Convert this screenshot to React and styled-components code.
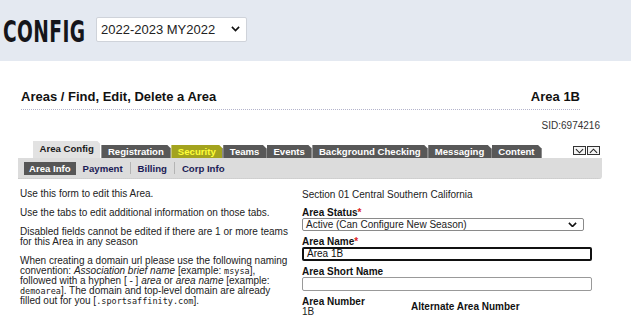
import React from "react";
import styled, { createGlobalStyle } from "styled-components";

const Global = createGlobalStyle`
  html, body { margin: 0; padding: 0; background: #fff; }
  body { font-family: "Liberation Sans", Arial, sans-serif; color: #222; }
`;

const Header = styled.header`
  height: 61px;
  background: #e4e9f1;
  display: flex;
  align-items: center;
  gap: 14px;
  padding-left: 3px;
`;

const BrandBox = styled.div`
  width: 79px;
  height: 30px;
  overflow: visible;
  margin-top: 2px;
`;

const Brand = styled.div`
  font-family: "DejaVu Sans Condensed", "Liberation Sans", sans-serif;
  font-weight: 700;
  font-size: 30px;
  line-height: 30px;
  color: #15151a;
  transform: scaleX(0.69);
  transform-origin: left center;
  white-space: nowrap;
  letter-spacing: 0.6px;
`;

const SeasonSelect = styled.div`
  width: 151px;
  height: 25px;
  box-sizing: border-box;
  background: #fff;
  border: 1px solid #cfd3da;
  border-radius: 2px;
  display: flex;
  align-items: center;
  justify-content: space-between;
  padding: 0 6px 0 4px;
  font-size: 13px;
  color: #222;
  margin-top: -3px;
`;

const FieldSelect = styled.div`
  width: 282px;
  height: 13px;
  box-sizing: border-box;
  border: 1px solid #8a8a8a;
  border-radius: 2px;
  display: flex;
  align-items: center;
  justify-content: space-between;
  padding: 0 6px 0 3px;
  font-size: 10px;
  color: #222;
`;

const Chevron = ({ size = 9 }) => (
  <svg width={size} height={size * 0.6} viewBox="0 0 10 6">
    <path d="M1 1 L5 5 L9 1" fill="none" stroke="#111" strokeWidth="1.8" />
  </svg>
);

const TitleRow = styled.div`
  margin: 28px 51px 0 21px;
  display: flex;
  justify-content: space-between;
  align-items: baseline;
  font-size: 13px;
  font-weight: 700;
  line-height: 15px;
  color: #111;
  padding-bottom: 5px;
  border-bottom: 1px dotted #b4b4cc;
`;

const Sid = styled.div`
  margin: 10px 31px 0 0;
  text-align: right;
  font-size: 10px;
  line-height: 12px;
  color: #333;
`;

const TabsArea = styled.div`
  margin: 9px 29px 0 18px;
`;

const TabRow = styled.div`
  display: flex;
  align-items: flex-end;
  padding-left: 15px;
  height: 17px;
`;

const Tab = styled.div`
  font-size: 9.6px;
  font-weight: 700;
  height: ${(p) => (p.$active ? "17px" : "13px")};
  line-height: ${(p) => (p.$active ? "16px" : "13px")};
  padding: 0 6.5px;
  background: ${(p) => (p.$active ? "#e2e2e2" : p.$hl ? "#a3a31e" : "#585858")};
  color: ${(p) => (p.$active ? "#1a1a1a" : p.$hl ? "#ffff3a" : "#fff")};
  border-right: 1px solid ${(p) => (p.$active ? "#fff" : "#8c8c8c")};
  clip-path: polygon(0 0, calc(100% - 4px) 0, 100% 4px, 100% 100%, 0 100%);
  white-space: nowrap;
`;

const Arrows = styled.div`
  margin-left: auto;
  margin-right: 2px;
  align-self: center;
  margin-top: 2px;
  display: flex;
  gap: 1px;
`;

const ArrowBtn = styled.div`
  width: 13px;
  height: 9px;
  box-sizing: border-box;
  border: 1px solid #333;
  background: #f4f4f4;
  display: flex;
  align-items: center;
  justify-content: center;
`;

const SubBar = styled.div`
  height: 20px;
  background: #dcdcdc;
  border-radius: 0 0 3px 0;
  border-bottom: 1px dotted #c4c4c4;
  display: flex;
  align-items: center;
  padding-left: 6px;
`;

const SubTab = styled.div`
  font-size: 9.6px;
  font-weight: 700;
  height: 13px;
  line-height: 13px;
  padding: 0 ${(p) => (p.$active ? "5px" : "7px")};
  background: ${(p) => (p.$active ? "#565656" : "transparent")};
  color: ${(p) => (p.$active ? "#fff" : "#1b1b55")};
  white-space: nowrap;
`;

const SubSep = styled.div`
  width: 1px;
  height: 12px;
  background: #b4b4b4;
`;

const Columns = styled.div`
  display: grid;
  grid-template-columns: 272px 290px;
  column-gap: 10px;
  padding: 10px 0 0 20px;
`;

const Help = styled.div`
  font-size: 10px;
  line-height: 10px;
  color: #222;
`;

const P = styled.p`
  margin: 0 0 9px;
`;

const Code = styled.span`
  font-family: "DejaVu Sans Mono", "Liberation Mono", monospace;
  font-size: 8.5px;
  line-height: 8px;
`;

const Form = styled.div`
  font-size: 10px;
  color: #222;
`;

const Section = styled.div`
  line-height: 12px;
  margin-bottom: 6px;
`;

const Label = styled.div`
  font-weight: 700;
  line-height: 11px;
  color: #111;
`;

const Req = styled.span`
  color: #d22;
`;

const Field = styled.div`
  margin-bottom: 5px;
`;

const Input = styled.div`
  width: 290px;
  height: 14px;
  box-sizing: border-box;
  border: ${(p) => (p.$focus ? "2px solid #111" : "1px solid #999")};
  border-radius: 2px;
  padding: 0 3px;
  line-height: ${(p) => (p.$focus ? "10px" : "12px")};
  font-size: 10px;
  color: #111;
`;

const NumberRow = styled.div`
  display: grid;
  grid-template-columns: 109px 1fr;
  align-items: center;
`;

const Value = styled.div`
  line-height: 10px;
`;

export default function App() {
  const tabs = ["Registration", "Security", "Teams", "Events", "Background Checking", "Messaging", "Content"];
  return (
    <>
      <Global />
      <Header>
        <BrandBox>
          <Brand>CONFIG</Brand>
        </BrandBox>
        <SeasonSelect>
          <span>2022-2023 MY2022</span>
          <Chevron size={9} />
        </SeasonSelect>
      </Header>
      <TitleRow>
        <span>Areas / Find, Edit, Delete a Area</span>
        <span>Area 1B</span>
      </TitleRow>
      <Sid>SID:6974216</Sid>
      <TabsArea>
        <TabRow>
          <Tab $active>Area Config</Tab>
          {tabs.map((t) => (
            <Tab key={t} $hl={t === "Security"}>
              {t}
            </Tab>
          ))}
          <Arrows>
            <ArrowBtn>
              <svg width="9" height="6" viewBox="0 0 10 6">
                <path d="M1 1 L5 5 L9 1" fill="none" stroke="#222" strokeWidth="1.2" />
              </svg>
            </ArrowBtn>
            <ArrowBtn>
              <svg width="9" height="6" viewBox="0 0 10 6">
                <path d="M1 5 L5 1 L9 5" fill="none" stroke="#222" strokeWidth="1.2" />
              </svg>
            </ArrowBtn>
          </Arrows>
        </TabRow>
        <SubBar>
          <SubTab $active>Area Info</SubTab>
          <SubTab>Payment</SubTab>
          <SubSep />
          <SubTab>Billing</SubTab>
          <SubSep />
          <SubTab>Corp Info</SubTab>
        </SubBar>
      </TabsArea>
      <Columns>
        <Help>
          <P>Use this form to edit this Area.</P>
          <P>Use the tabs to edit additional information on those tabs.</P>
          <P>Disabled fields cannot be edited if there are 1 or more teams for this Area in any season</P>
          <P>
            When creating a domain url please use the following naming convention: <i>Association brief name</i>{" "}
            [example: <Code>msysa</Code>], followed with a hyphen [ - ] <i>area</i> or <i>area name</i> [example:{" "}
            <Code>demoarea</Code>]. The domain and top-level domain are already filled out for you [
            <Code>.sportsaffinity.com</Code>].
          </P>
        </Help>
        <Form>
          <Section>Section 01 Central Southern California</Section>
          <Field>
            <Label>
              Area Status<Req>*</Req>
            </Label>
            <FieldSelect>
              <span>Active (Can Configure New Season)</span>
              <Chevron size={9} />
            </FieldSelect>
          </Field>
          <Field>
            <Label>
              Area Name<Req>*</Req>
            </Label>
            <Input $focus>Area 1B</Input>
          </Field>
          <Field>
            <Label>Area Short Name</Label>
            <Input />
          </Field>
          <NumberRow>
            <div>
              <Label>Area Number</Label>
              <Value>1B</Value>
            </div>
            <Label>Alternate Area Number</Label>
          </NumberRow>
        </Form>
      </Columns>
    </>
  );
}
